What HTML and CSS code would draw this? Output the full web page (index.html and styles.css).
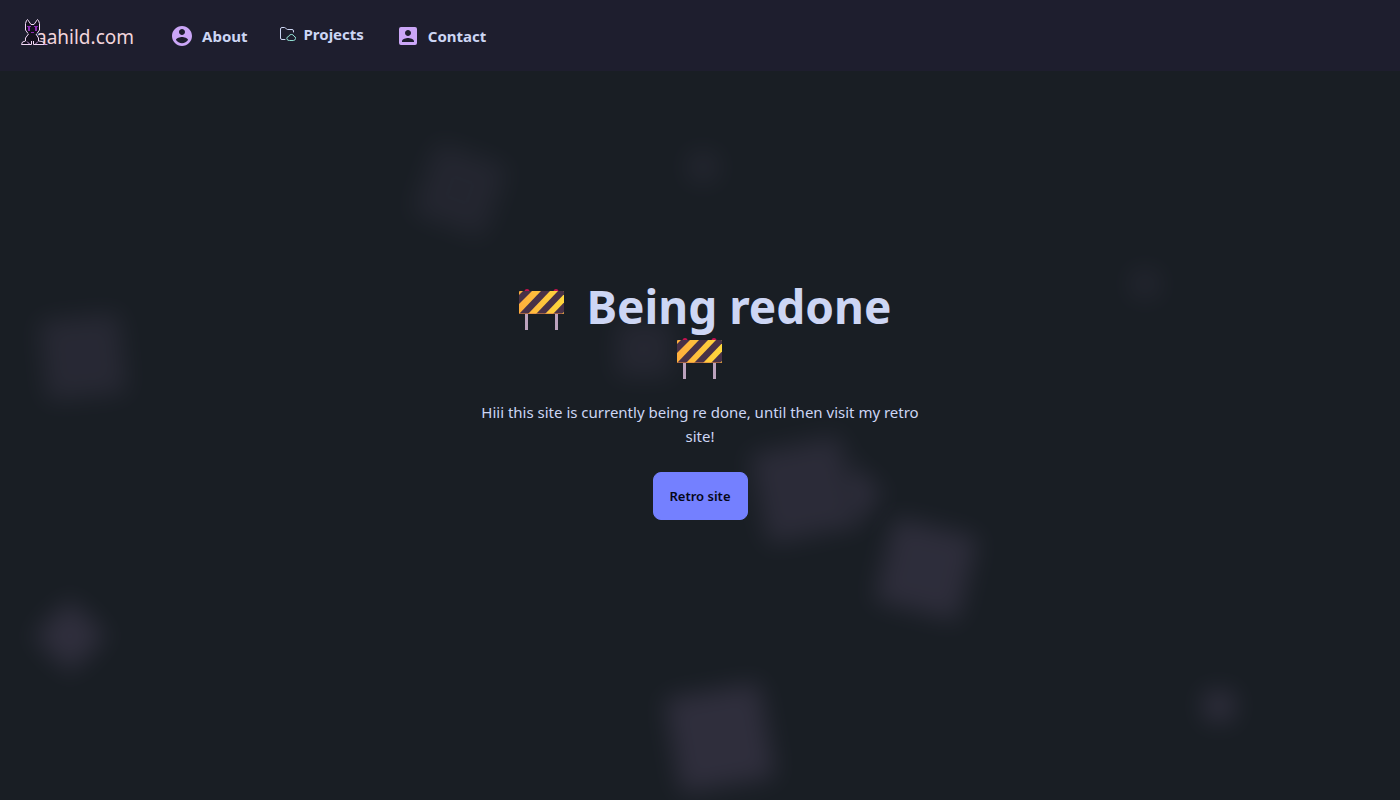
FILE: index.html
```html
<!DOCTYPE html>
<html lang="en">

<head>
    <meta charset="UTF-8">
    <meta name="viewport" content="width=device-width, initial-scale=1.0">
    <title>aahild.com</title>
    <link rel="stylesheet" href="styles.css">
</head>

<body>
    <!-- blurred squares behind the page -->
    <div class="squares" aria-hidden="true">
        <span class="square sq-1"></span>
        <span class="square sq-2"></span>
        <span class="square sq-3"></span>
        <span class="square sq-4"></span>
        <span class="square sq-5"></span>
        <div class="pair">
            <span class="square sq-6"></span>
            <span class="square sq-7"></span>
        </div>
        <span class="square sq-8"></span>
        <span class="square sq-9"></span>
        <span class="square sq-10"></span>
        <span class="square sq-11"></span>
    </div>

    <!-- barricade used on both sides of the title -->
    <svg class="defs" width="0" height="0" aria-hidden="true">
        <defs>
            <linearGradient id="board-fill" x1="0" y1="0" x2="1" y2="0">
                <stop offset="0" stop-color="#ffae3c" />
                <stop offset="1" stop-color="#ffd83c" />
            </linearGradient>
            <clipPath id="board-clip">
                <rect x="0" y="2" width="45" height="23" rx="1" />
            </clipPath>
            <symbol id="barrier" viewBox="0 0 46 42">
                <circle cx="8" cy="2.500" r="2.500" fill="#c3124f" />
                <circle cx="37" cy="2.500" r="2.500" fill="#c3124f" />
                <rect x="6" y="25" width="3" height="16" fill="#bba2bd" />
                <rect x="36" y="25" width="3" height="16" fill="#bba2bd" />
                <rect x="0" y="2" width="45" height="23" rx="1" fill="url(#board-fill)" />
                <g clip-path="url(#board-clip)" fill="#483147">
                    <path d="M4 2H13L0 15V6z" />
                    <path d="M22 2H31L9 25H0z" />
                    <path d="M39 2H48L26 25H17z" />
                    <path d="M56 2H65L43 25H34z" />
                </g>
                <path d="M0 24.500H45" stroke="#d98245" opacity="0.6" />
            </symbol>
        </defs>
    </svg>

    <header class="navbar">
        <a class="logo" href="#">
            <svg class="cat" viewBox="0 0 28 28" aria-hidden="true">
                <path d="M5.500 13V6.500L8 1.500L11 6.500H14L17 1.500L19.500 6.500V13L16 16L19 19L22.500 23.500L24.500 27H1.500L5.500 21L9 16z" fill="#15101f" />
                <g fill="none" stroke="#f2d9f7">
                    <path d="M8 15.500L5.500 12V5.500L6.500 2.500L7.500 1.500L11 6.500H14L17.500 1.500L18.500 2.500L19.500 5.500V12L17 15.500" />
                    <path d="M8.500 16L5.500 20V23L2.500 24L1.500 26.500H11.500V23M16 16L18.500 20V23L22.500 23.500L24.500 26.500H13.500V23" />
                    <path d="M7 23.500L9.500 26M18 23.500L15.500 26M24 26.500H27.500" stroke="#c79be0" />
                </g>
                <path d="M7 8h4v1h-1v4h-2v-4h-1zM14 8h4v1h-1v4h-2v-4h-1zM11 14h3v1h-3z" fill="#8a2bb4" />
            </svg>
            aahild.com
        </a>
        <nav class="menu">
            <a class="menu-item" href="#">
                <svg class="icon" viewBox="0 0 24 24" fill="currentColor" aria-hidden="true">
                    <path d="M12 2C6.480 2 2 6.480 2 12s4.480 10 10 10 10-4.480 10-10S17.520 2 12 2zm0 3c1.660 0 3 1.340 3 3s-1.340 3-3 3-3-1.340-3-3 1.340-3 3-3zm0 14.200c-2.500 0-4.710-1.280-6-3.220.03-1.990 4-3.080 6-3.080 1.990 0 5.970 1.090 6 3.080-1.290 1.940-3.500 3.220-6 3.220z" />
                </svg>
                About
            </a>
            <a class="menu-item menu-item-small" href="#">
                <svg class="icon-small" viewBox="0 0 16 16" fill="none" stroke-linecap="round" stroke-linejoin="round" aria-hidden="true">
                    <path d="M5 13.500H2A1.500 1.500 0 0 1 .5 12V3A1.500 1.500 0 0 1 2 1.500h2.500c1.500 0 1.500 2 3 2H12A1.500 1.500 0 0 1 13.500 5v1" stroke="#cdd6f4" />
                    <path d="M9 14.500a2 2 0 0 1-.3-4 2.800 2.800 0 0 1 5.300-.3 2.200 2.200 0 0 1-.3 4.300z" stroke="#94e2d5" />
                </svg>
                Projects
            </a>
            <a class="menu-item" href="#">
                <svg class="icon" viewBox="0 0 24 24" fill="currentColor" aria-hidden="true">
                    <path d="M19 3H5a2 2 0 0 0-2 2v14a2 2 0 0 0 2 2h14a2 2 0 0 0 2-2V5a2 2 0 0 0-2-2zm-7 3c1.660 0 3 1.340 3 3s-1.340 3-3 3-3-1.340-3-3 1.340-3 3-3zm6 12H6v-1c0-2 4-3.100 6-3.100s6 1.100 6 3.100v1z" />
                </svg>
                Contact
            </a>
        </nav>
    </header>

    <main class="hero">
        <div class="hero-content">
            <h1 class="title">
                <svg class="barrier" aria-hidden="true"><use href="#barrier" /></svg>
                Being redone
                <svg class="barrier" aria-hidden="true"><use href="#barrier" /></svg>
            </h1>
            <p class="text">Hiii this site is currently being re done, until then visit my retro site!</p>
            <button class="btn" type="button">Retro site</button>
        </div>
    </main>
</body>

</html>
```

FILE: styles.css
```css
* {
    margin: 0;
    padding: 0;
    box-sizing: border-box;
}

body {
    position: relative;
    min-height: 100vh;
    overflow-x: hidden;
    background: #191e24;
    color: #cdd6f4;
    font-family: "Noto Sans", sans-serif;
    font-size: 15px;
    line-height: 24px;
}

a {
    color: inherit;
    text-decoration: none;
}

.defs {
    position: absolute;
}

/* background */
.squares {
    position: absolute;
    inset: 0;
    overflow: hidden;
    z-index: -1;
}

.square {
    position: absolute;
    background: #e0b0ff;
    filter: blur(12px);
    opacity: 0.11;
}

/* two squares that overlap share one opacity */
.pair {
    position: absolute;
    inset: 0;
    opacity: 0.09;
}

.pair .square {
    opacity: 1;
}

.sq-1 {
    left: 422px;
    top: 152px;
    width: 76px;
    height: 76px;
    opacity: 0.05;
    transform: rotate(20deg);
}

.sq-2 {
    left: 688px;
    top: 152px;
    width: 30px;
    height: 30px;
    opacity: 0.05;
}

.sq-3 {
    left: 1131px;
    top: 270px;
    width: 28px;
    height: 28px;
    opacity: 0.05;
}

.sq-4 {
    left: 43px;
    top: 317px;
    width: 80px;
    height: 80px;
    opacity: 0.07;
    transform: rotate(-6deg);
}

.sq-5 {
    left: 616px;
    top: 321px;
    width: 56px;
    height: 56px;
    opacity: 0.06;
}

.sq-6 {
    left: 758px;
    top: 444px;
    width: 92px;
    height: 92px;
    transform: rotate(-12deg);
}

.sq-7 {
    left: 836px;
    top: 474px;
    width: 40px;
    height: 40px;
    transform: rotate(45deg);
}

.sq-8 {
    left: 883px;
    top: 526px;
    width: 86px;
    height: 86px;
    opacity: 0.1;
    transform: rotate(14deg);
}

.sq-9 {
    left: 44px;
    top: 610px;
    width: 52px;
    height: 52px;
    transform: rotate(45deg);
}

.sq-10 {
    left: 672px;
    top: 690px;
    width: 96px;
    height: 96px;
    transform: rotate(-10deg);
}

.sq-11 {
    left: 1204px;
    top: 691px;
    width: 30px;
    height: 30px;
}

/* navbar */
.navbar {
    position: absolute;
    top: 0;
    left: 0;
    right: 0;
    display: flex;
    align-items: center;
    gap: 4px;
    height: 71px;
    padding: 0 20px;
    background: #1e1e2e;
}

.logo {
    position: relative;
    padding: 2px 16px 0;
    color: #f2d5dc;
    font-size: 19px;
}

.cat {
    position: absolute;
    left: 0;
    bottom: 3px;
    width: 28px;
    height: 28px;
}

.menu {
    display: flex;
    align-items: center;
}

.menu-item {
    display: flex;
    align-items: center;
    gap: 8px;
    padding: 0 16px;
    font-weight: 700;
}

.menu-item-small {
    padding-bottom: 3px;
}

.icon {
    width: 24px;
    height: 24px;
    color: #cba6f7;
}

.icon-small {
    width: 16px;
    height: 16px;
}

/* hero */
.hero {
    display: flex;
    align-items: center;
    justify-content: center;
    min-height: 100vh;
    padding: 16px;
    text-align: center;
}

.hero-content {
    max-width: 448px;
}

.title {
    padding-top: 2px;
    font-size: 46px;
    font-weight: 700;
    line-height: 48px;
}

.barrier {
    width: 46px;
    height: 42px;
    margin: 0 10px;
    vertical-align: -7px;
}

.text {
    padding: 20px 0 24px;
}

.btn {
    height: 48px;
    padding: 0 16px;
    border: 1px solid #7480ff;
    border-radius: 8px;
    background: #7480ff;
    color: #050617;
    font-family: inherit;
    font-size: 13px;
    font-weight: 600;
    cursor: pointer;
}
```
